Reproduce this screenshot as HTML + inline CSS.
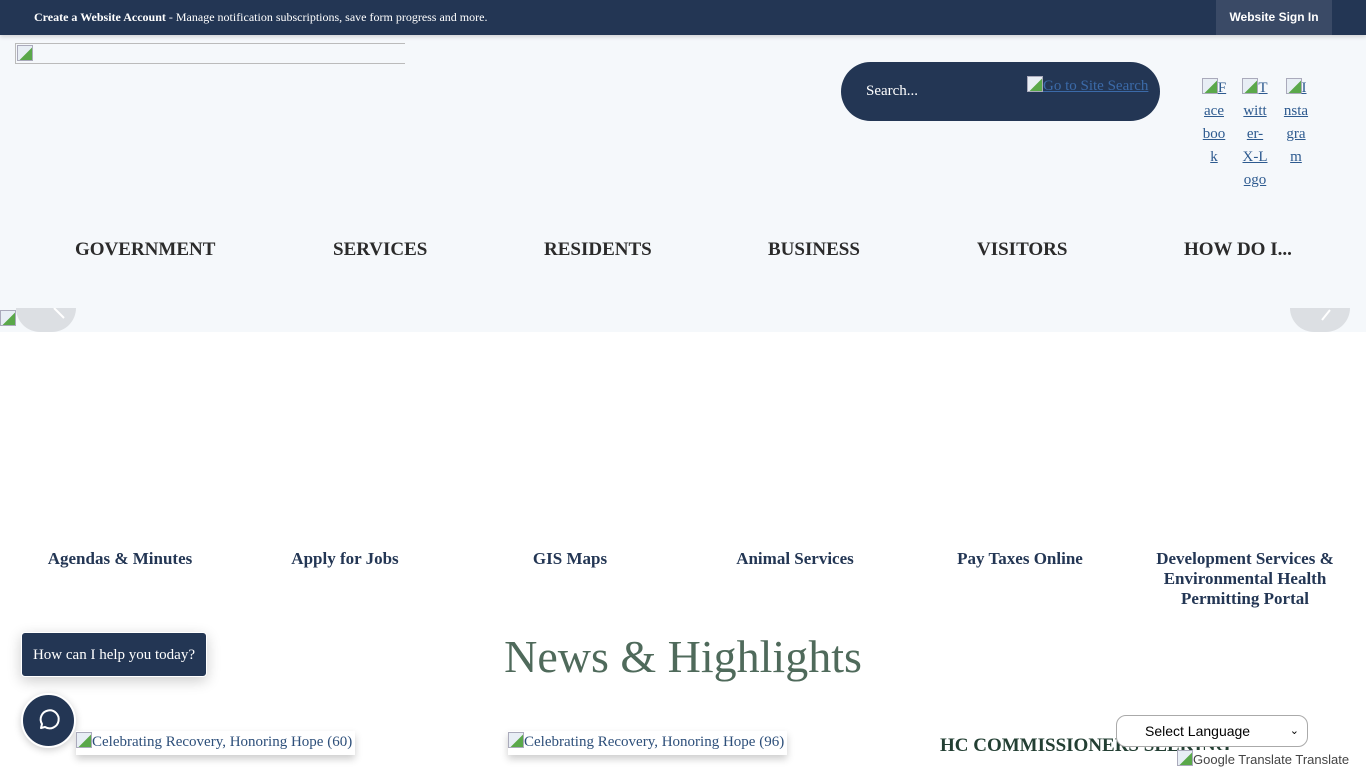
<!DOCTYPE html>
<html><head><meta charset="utf-8">
<style>
*{margin:0;padding:0;box-sizing:border-box}
body{width:1366px;height:768px;overflow:hidden;background:#fff;font-family:"Liberation Serif",serif;position:relative}
.top{position:absolute;left:0;top:0;width:1366px;height:35px;background:#233654;color:#fff;box-shadow:0 2px 4px rgba(0,0,0,.15);z-index:2}
.top .msg{position:absolute;left:34px;top:10px;font-size:12px}
.top .sign{position:absolute;left:1216px;top:0;width:116px;height:35px;background:#3a4a66;font-family:"Liberation Sans",sans-serif;font-size:12px;font-weight:bold;line-height:35px;text-align:center}
.hdr{position:absolute;left:0;top:35px;width:1366px;height:297px;background:#f5f8fb}
.logo{position:absolute;left:15px;top:8px;width:390px;height:21px;border-top:1px solid #bbb;border-left:1px solid #bbb;border-bottom:1px solid #bbb}
.bi{display:inline-block;width:16px;height:16px;vertical-align:-2px;background:linear-gradient(135deg,#e8eef5 55%,#5aa84a 56%);border:1px solid #aab}
.search{position:absolute;left:841px;top:62px;width:319px;height:59px;border-radius:30px;background:#233654}
.search .ph{position:absolute;left:25px;top:21px;color:#fff;font-size:15px}
.search .go{position:absolute;left:186px;top:14px;color:#3b6aa8;font-size:15px;text-decoration:underline}
.soc{position:absolute;top:77px;width:26px;color:#2d5a8f;font-size:15px;line-height:23px;text-align:center;text-decoration:underline;word-break:break-all}
.nav{position:absolute;top:239px;font-size:19px;font-weight:bold;color:#2b2b2b}
.arrow{position:absolute;top:308px;width:60px;height:24px;background:#dcdfe3;border-radius:0 0 30px 30px}
.ql{position:absolute;top:549px;width:220px;text-align:center;font-size:17px;font-weight:bold;color:#233654;line-height:20px}
h2{position:absolute;left:0;width:1366px;top:630px;text-align:center;font-weight:normal;font-size:46px;color:#4f6a5b}
.bubble{position:absolute;left:21px;top:632px;width:186px;height:45px;background:#233654;border-radius:4px;color:#fff;font-size:15px;line-height:45px;text-align:center;box-shadow:0 4px 14px rgba(0,0,0,.2);border:1px solid #fff}
.chat{position:absolute;left:21px;top:693px;width:55px;height:55px;border-radius:50%;background:#233654;border:2px solid #fff;box-shadow:0 2px 8px rgba(0,0,0,.2)}
.news{position:absolute;top:731px;height:24px;background:#fff;box-shadow:0 4px 8px rgba(0,0,0,.2);color:#2d4f7a;font-size:15px;line-height:22px;padding-right:3px}
.hc{position:absolute;left:940px;top:735px;font-size:19px;font-weight:bold;color:#233f33}
.sel{position:absolute;left:1116px;top:715px;width:192px;height:32px;border:1px solid #aaa;border-radius:10px;background:#fff;font-family:"Liberation Sans",sans-serif;font-size:14px;line-height:30px;padding-left:28px;color:#000}
.gt{position:absolute;left:1177px;top:750px;font-family:"Liberation Sans",sans-serif;font-size:13px;color:#444;background:#fff}
</style></head><body>
<div class="top"><div class="msg"><b>Create a Website Account</b> - Manage notification subscriptions, save form progress and more.</div><div class="sign">Website Sign In</div></div>
<div class="hdr">
<div class="logo"><span class="bi" style="margin:1px 0 0 1px"></span></div>
</div>
<div class="search"><div class="ph">Search...</div><div class="go"><span class="bi"></span>Go to Site Search</div></div>
<div class="soc" style="left:1201px"><span class="bi"></span>Facebook</div>
<div class="soc" style="left:1242px"><span class="bi"></span>Twitter-X-Logo</div>
<div class="soc" style="left:1283px"><span class="bi"></span>Instagram</div>
<div class="nav" style="left:75px">GOVERNMENT</div>
<div class="nav" style="left:333px">SERVICES</div>
<div class="nav" style="left:544px">RESIDENTS</div>
<div class="nav" style="left:768px">BUSINESS</div>
<div class="nav" style="left:977px">VISITORS</div>
<div class="nav" style="left:1184px">HOW DO I...</div>
<div class="arrow" style="left:16px"><svg width="60" height="24"><path d="M38 0 L48 10" stroke="#fff" stroke-width="2"/></svg></div>
<div class="arrow" style="left:1290px"><svg width="60" height="24"><path d="M32 12 L40 2" stroke="#fff" stroke-width="2"/></svg></div>
<span class="bi" style="position:absolute;left:0;top:310px"></span>
<div class="ql" style="left:10px">Agendas &amp; Minutes</div>
<div class="ql" style="left:235px">Apply for Jobs</div>
<div class="ql" style="left:460px">GIS Maps</div>
<div class="ql" style="left:685px">Animal Services</div>
<div class="ql" style="left:910px">Pay Taxes Online</div>
<div class="ql" style="left:1135px">Development Services &amp; Environmental Health Permitting Portal</div>
<h2>News &amp; Highlights</h2>
<div class="bubble">How can I help you today?</div>
<div class="chat"><svg width="51" height="51" viewBox="0 0 51 51"><path d="M18 33 L19 29 A9 9 0 1 1 22 32 Z" fill="none" stroke="#fff" stroke-width="2" stroke-linejoin="round"/></svg></div>
<div class="news" style="left:76px"><span class="bi"></span>Celebrating Recovery, Honoring Hope (60)</div>
<div class="news" style="left:508px"><span class="bi"></span>Celebrating Recovery, Honoring Hope (96)</div>
<div class="hc">HC COMMISSIONERS SEEKING</div>
<div class="sel">Select Language<span style="position:absolute;right:8px;top:0;font-size:11px">&#8964;</span></div>
<div class="gt"><span class="bi"></span>Google Translate Translate</div>
</body></html>
